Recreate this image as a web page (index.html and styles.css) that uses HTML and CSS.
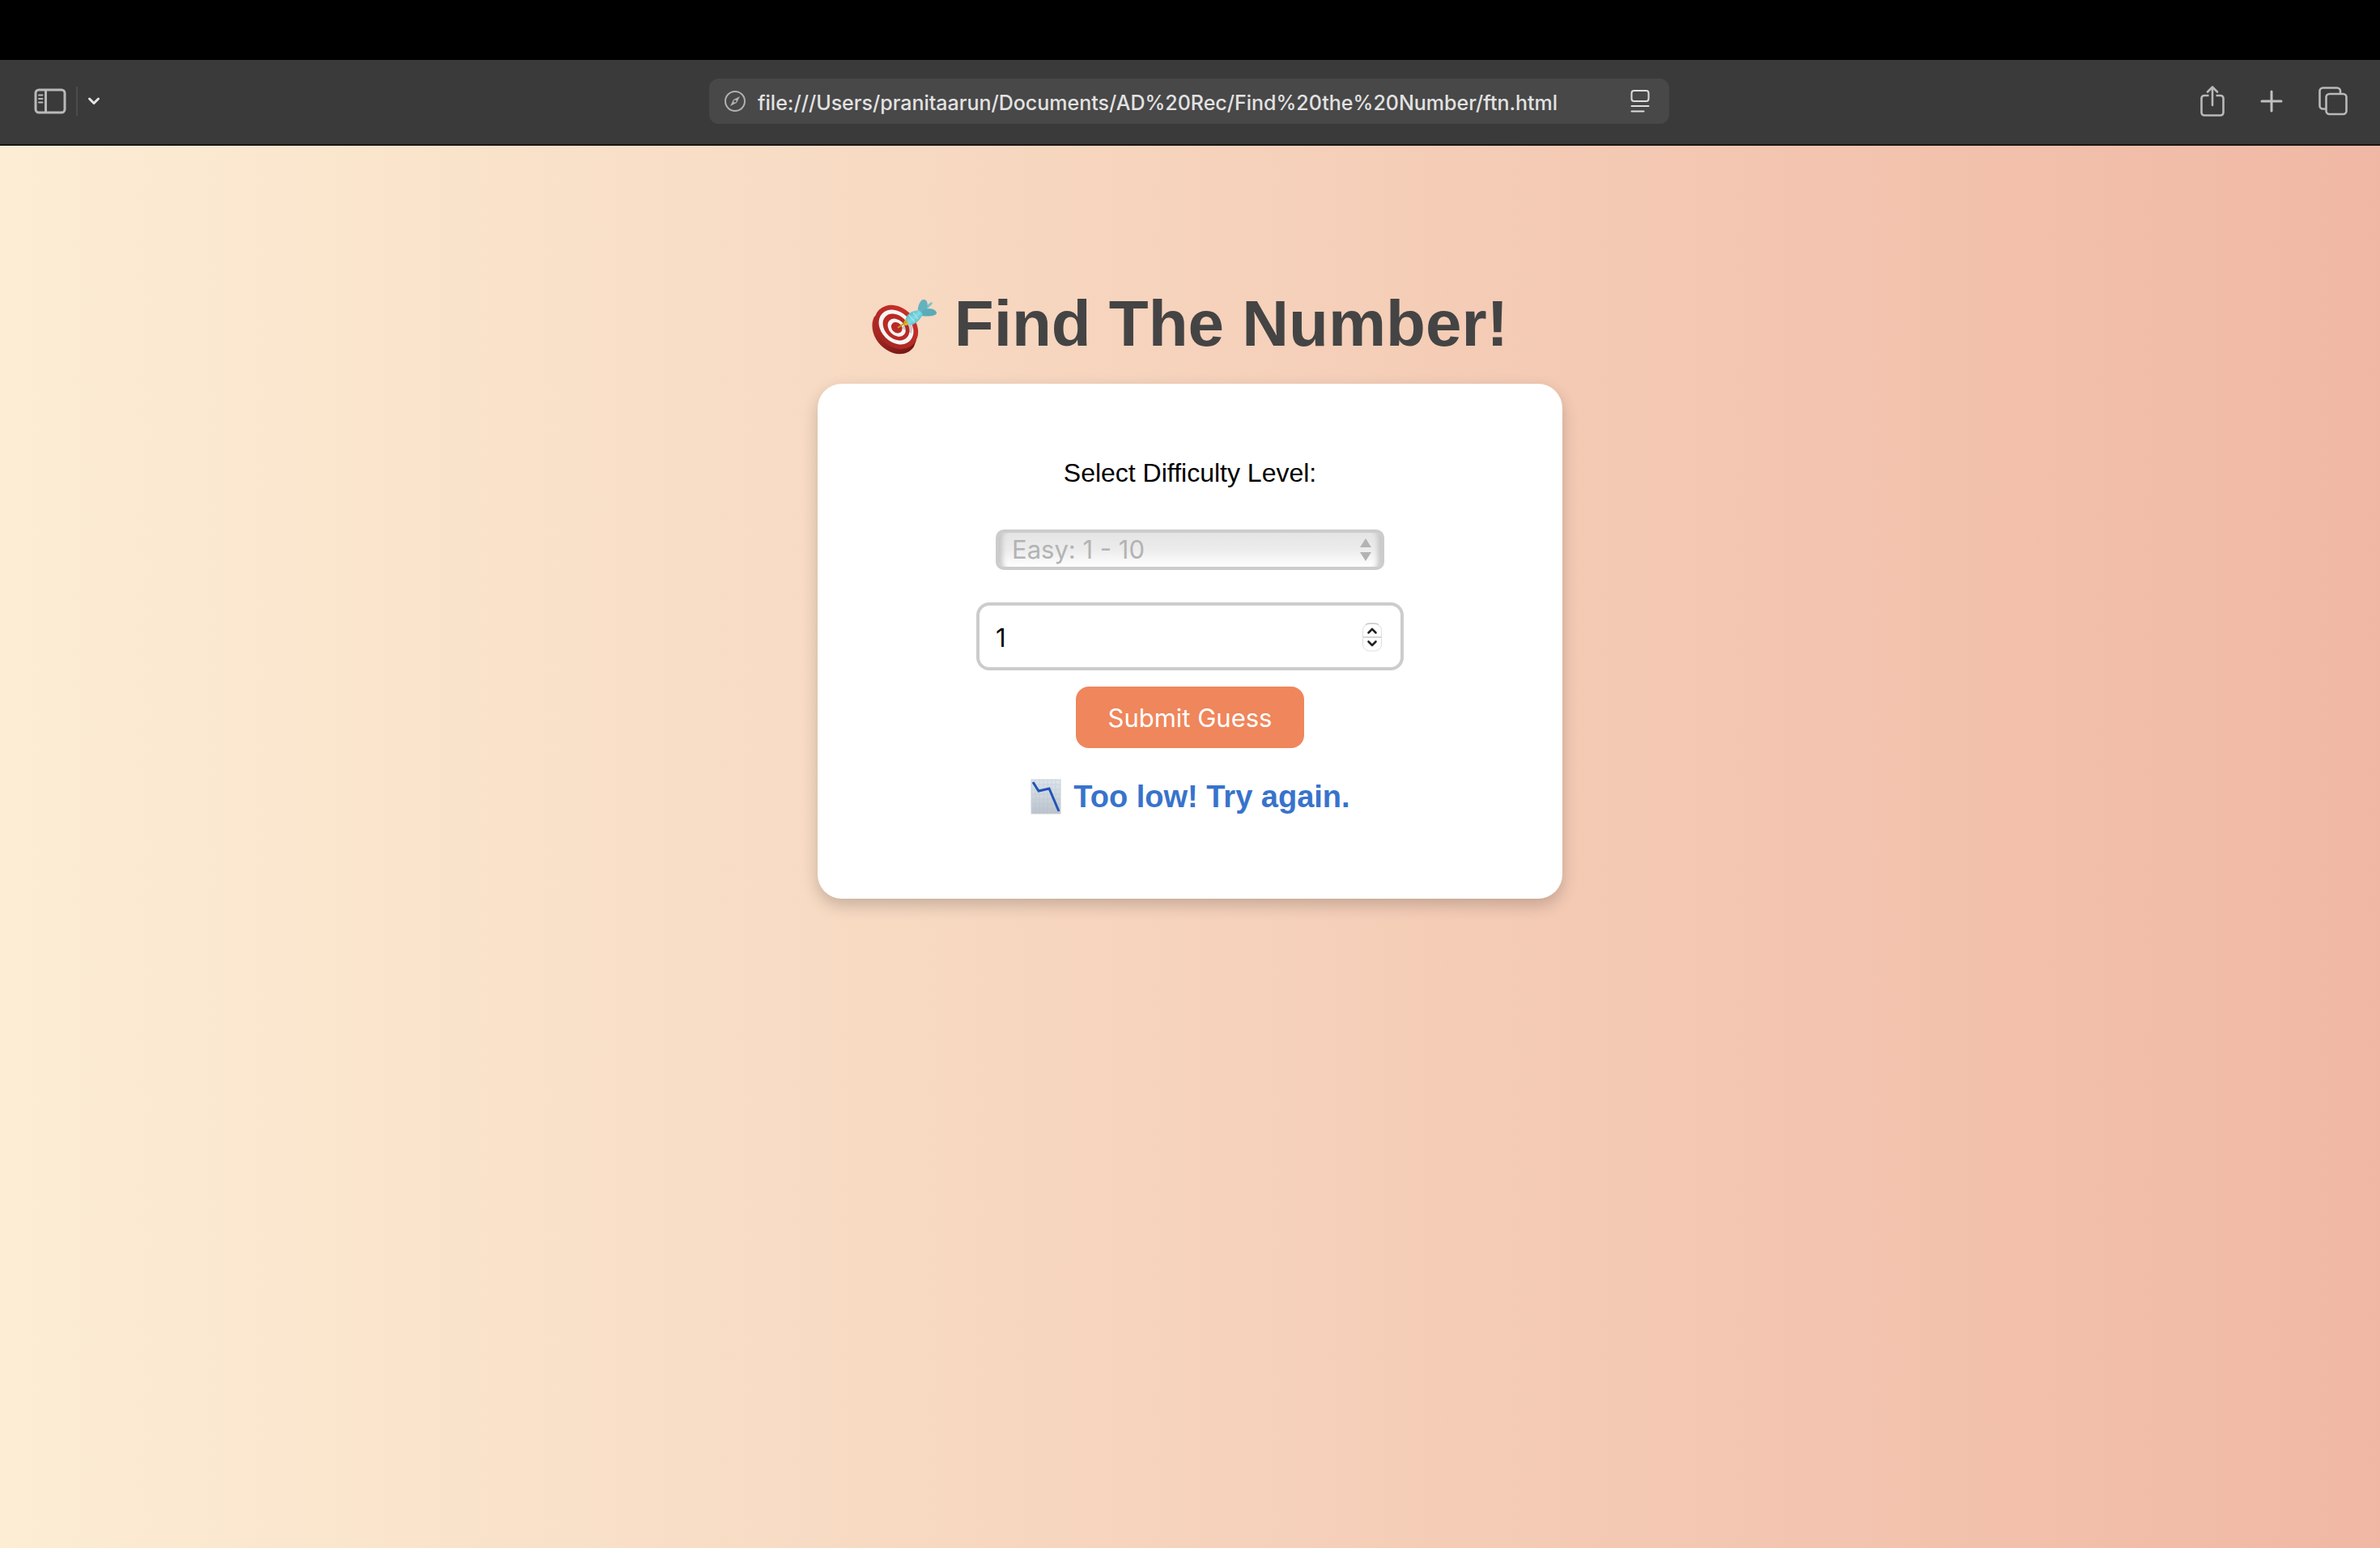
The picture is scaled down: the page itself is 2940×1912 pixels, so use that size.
FILE: index.html
```html
<!DOCTYPE html>
<html lang="en">
<head>
<meta charset="utf-8">
<title>Find The Number!</title>
<link rel="stylesheet" href="styles.css">
</head>
<body>
<div class="menu-strip"></div>
<header class="toolbar">
  <div class="tools tools-left">
    <button class="tool" type="button" aria-label="Show sidebar">
      <svg width="40" height="32" viewBox="0 0 40 32" fill="none" stroke="#b9b9b9" stroke-width="3">
        <rect x="2" y="2" width="36" height="28" rx="4"/>
        <path d="M14.500 2v28"/>
        <path d="M6 8.500h4.500M6 13h4.500M6 17.500h4.500" stroke-width="2" stroke-linecap="round"/>
      </svg>
    </button>
    <span class="divider"></span>
    <button class="tool" type="button" aria-label="Tab groups">
      <svg width="16" height="12" viewBox="0 0 16 12" fill="none" stroke="#e4e4e4" stroke-width="3" stroke-linecap="round" stroke-linejoin="round"><path d="M2.500 3L8 8.500 13.500 3"/></svg>
    </button>
  </div>
  <div class="address">
    <svg width="28" height="28" viewBox="0 0 28 28" fill="none" stroke="#b0b0b0" stroke-width="2">
      <circle cx="14" cy="14" r="12"/>
      <path d="M20 8l-4 8-8 4 4-8z" fill="#b0b0b0" stroke="none"/>
      <circle cx="14" cy="14" r="1.600" fill="#484848" stroke="none"/>
    </svg>
    <input class="url" type="text" aria-label="Address" value="file:///Users/pranitaarun/Documents/AD%20Rec/Find%20the%20Number/ftn.html">
    <button class="tool" type="button" aria-label="Reader">
      <svg width="24" height="30" viewBox="0 0 24 30" fill="none" stroke="#dedede" stroke-width="2" stroke-linecap="round">
        <rect x="1.500" y="2" width="21" height="13" rx="3"/>
        <path d="M1.500 21h21M1.500 27.500h15"/>
      </svg>
    </button>
  </div>
  <div class="tools tools-right">
    <button class="tool" type="button" aria-label="Share">
      <svg width="30" height="38" viewBox="0 0 30 38" fill="none" stroke="#b9b9b9" stroke-width="2.600" stroke-linejoin="round">
        <path d="M10.500 12H5a3.500 3.500 0 0 0-3.500 3.500V33A3.500 3.500 0 0 0 5 36.500h20a3.500 3.500 0 0 0 3.500-3.500V15.500A3.500 3.500 0 0 0 25 12h-5.500"/>
        <path d="M15 24V2M9 7.500L15 1.500l6 6" stroke-linecap="round"/>
      </svg>
    </button>
    <button class="tool" type="button" aria-label="New tab">
      <svg width="28" height="28" viewBox="0 0 28 28" stroke="#c0c0c0" stroke-width="3" stroke-linecap="round"><path d="M14 2v24M2 14h24"/></svg>
    </button>
    <button class="tool" type="button" aria-label="Tab overview">
      <svg width="36" height="36" viewBox="0 0 36 36" fill="none" stroke="#b9b9b9" stroke-width="2.600">
        <path d="M9 27.500H5.500a4 4 0 0 1-4-4V5.500a4 4 0 0 1 4-4h17.500a4 4 0 0 1 4 4V9"/>
        <rect x="9.500" y="9" width="25" height="25" rx="4"/>
      </svg>
    </button>
  </div>
</header>
<main class="page">
  <h1 class="title">
    <svg width="80" height="80" viewBox="0 -6 80 80" role="img" aria-label="Bullseye">
      <defs>
        <linearGradient id="rim" x1="0" y1="0" x2="1" y2="1"><stop offset="0" stop-color="#b8322b"/><stop offset="1" stop-color="#6d1411"/></linearGradient>
        <linearGradient id="face" x1="0" y1="0" x2="0" y2="1"><stop offset="0" stop-color="#c73029"/><stop offset="1" stop-color="#a82521"/></linearGradient>
        <linearGradient id="barrel" x1="0" y1="0" x2="1" y2="1"><stop offset="0" stop-color="#4fa3b0"/><stop offset=".5" stop-color="#7edce6"/><stop offset="1" stop-color="#3f98a6"/></linearGradient>
      </defs>
      <path d="M3 25C-4 39 4 57 18 66c12 8 27 7 34-4l3-8L12 20z" fill="url(#rim)"/>
      <g transform="rotate(45 30 38)">
        <ellipse cx="30" cy="38" rx="30" ry="24" fill="url(#face)"/>
        <ellipse cx="30" cy="38" rx="24" ry="18.500" fill="#f7f5f5"/>
        <ellipse cx="30" cy="38" rx="18.500" ry="14" fill="#b92a25"/>
        <ellipse cx="31" cy="38" rx="12.500" ry="9.500" fill="#f7f5f5"/>
        <ellipse cx="31" cy="38" rx="7.500" ry="6" fill="#b92a25"/>
      </g>
      <path d="M36 39l13 7 2-9-9-4z" fill="#7a3030" opacity=".25"/>
      <path d="M38 35l4-8 7 7-7 2z" fill="#e0b62e"/>
      <path d="M32 39l11-8" stroke="#c79a22" stroke-width="2"/>
      <path d="M59 18L72 8c2-2 4 0 2 2L63 21z" fill="#7cc3cc"/>
      <path d="M57 19c-1-7 3-15 7-15 5 0 6 7 3 13l-6 6z" fill="#62b3bd"/>
      <path d="M60 21c5-8 18-7 20-1 0 5-11 5-19 4z" fill="#59abb6"/>
      <path d="M42 27c2-6 8-9 16-10l5 5c-3 7-9 12-15 14-3-2-5-4-6-9z" fill="url(#barrel)"/>
      <path d="M46 23l7 9M51 20l6 8" stroke="#b2f0f5" stroke-width="1"/>
    </svg>
    <span>Find The Number!</span>
  </h1>
  <form class="card">
    <label class="label" for="level">Select Difficulty Level:</label>
    <div class="field level">
      <select class="level-select" id="level" disabled>
        <option>Easy: 1 - 10</option>
      </select>
      <svg class="mark" width="14" height="30" viewBox="0 0 14 30" fill="#b3b3b3"><path d="M7 1l7 11H0zM0 18h14L7 29z"/></svg>
    </div>
    <div class="field guess">
      <input class="guess-input" type="number" value="1" aria-label="Your guess">
      <svg class="mark" width="26" height="38" viewBox="0 -1 26 38" fill="none">
        <rect x="1.500" y="2.500" width="23" height="33.500" rx="8" fill="#fff" stroke="#dedede"/>
        <path d="M5 3.500Q7 2 10 2h6q3 0 5 1.500" stroke="#b5b5b5"/>
        <path d="M2 19h22" stroke="#d8d8d8" stroke-width="2"/>
        <path d="M8.500 13.500L13 9l4.500 4.500M8.500 24.500L13 29l4.500-4.500" stroke="#222" stroke-width="2.600" stroke-linecap="round" stroke-linejoin="round"/>
      </svg>
    </div>
    <button class="submit" type="button">Submit Guess</button>
    <p class="message">
      <svg width="40" height="44" viewBox="0 0 40 44" role="img" aria-label="Chart decreasing">
        <defs><linearGradient id="paper" x1="0" y1="0" x2="0" y2="1"><stop offset="0" stop-color="#dde5ec"/><stop offset="1" stop-color="#bcc3cc"/></linearGradient></defs>
        <rect x="2" y="1" width="36" height="42" fill="url(#paper)" stroke="#c8d0d6"/>
        <path d="M7 1v42M12 1v42M17 1v42M22 1v42M27 1v42M32 1v42M2 7h36M2 13h36M2 19h36M2 25h36M2 31h36M2 37h36" stroke="#aebccc" stroke-width="1" opacity=".3"/>
        <path d="M4 4l7 11 13-3 12 28" fill="none" stroke="#2253b8" stroke-width="3"/>
      </svg>
      <span>Too low! Try again.</span>
    </p>
  </form>
</main>
</body>
</html>
```
FILE: styles.css
```css
* {
  box-sizing: border-box;
}

body {
  margin: 0;
  min-height: 100vh;
  display: flex;
  flex-direction: column;
  font-family: "Liberation Sans", Helvetica, Arial, sans-serif;
}

svg {
  display: block;
  flex: none;
}

.menu-strip {
  height: 74px;
  background: #000;
}

.toolbar {
  display: grid;
  grid-template-columns: 1fr minmax(0, 1186px) 1fr;
  align-items: center;
  height: 106px;
  padding: 0 40px 2px 38px;
  background: #3a3a3a;
  border-bottom: 2px solid #1a1512;
}

.tools {
  display: flex;
  align-items: center;
}

.tools-left {
  gap: 12px;
  padding-left: 4px;
}

.tools-right {
  justify-content: flex-end;
  gap: 44px;
}

.tool {
  padding: 0;
  border: 0;
  background: none;
}

.divider {
  width: 2px;
  height: 36px;
  background: #4c4c4c;
}

.address {
  display: flex;
  align-items: center;
  gap: 14px;
  height: 56px;
  padding: 0 24px 0 18px;
  border-radius: 12px;
  background: #484848;
}

.url {
  flex: 1;
  min-width: 0;
  padding: 4px 0 0;
  border: 0;
  outline: 0;
  background: none;
  color: #e2e2e2;
  font: 500 25px/32px Inter, sans-serif;
}

.page {
  flex: 1;
  display: flex;
  flex-direction: column;
  align-items: center;
  gap: 28px;
  padding: 174px 40px 80px;
  background: linear-gradient(to right, #fcedd4, #f0b8a4);
}

.title {
  display: flex;
  align-items: center;
  gap: 22px;
  margin: 0;
  color: #444;
  font-size: 80px;
  line-height: 92px;
}

.card {
  display: flex;
  flex-direction: column;
  align-items: center;
  width: 100%;
  max-width: 920px;
  padding: 90px 60px 102px;
  border-radius: 30px;
  background: #fff;
  box-shadow: 0 8px 20px rgba(0, 0, 0, 0.2);
}

.label {
  margin-bottom: 50px;
  font-size: 32px;
  line-height: 40px;
}

.field {
  display: grid;
  align-items: center;
  max-width: 100%;
}

.field > * {
  grid-area: 1 / 1;
}

.mark {
  justify-self: end;
  pointer-events: none;
}

.level {
  width: 480px;
  margin-bottom: 40px;
}

.level .mark {
  margin-right: 16px;
}

.level-select {
  appearance: none;
  width: 100%;
  height: 50px;
  padding: 0 16px;
  border: 4px solid #ccc;
  border-radius: 10px;
  background: linear-gradient(#e5e5e5, #ececec 50%, #fff);
  box-shadow: inset 10px 0 6px -6px #c4c4c4, inset -10px 0 6px -6px #c4c4c4;
  color: #b3b3b3;
  font: 31px/40px Inter, sans-serif;
  opacity: 1;
}

.guess {
  width: 528px;
  margin-bottom: 20px;
}

.guess .mark {
  margin-right: 26px;
}

.guess-input {
  appearance: textfield;
  width: 100%;
  height: 84px;
  padding: 2px 20px 0;
  border: 4px solid #ccc;
  border-radius: 16px;
  background: #fff;
  color: #000;
  font: 31px/40px Inter, sans-serif;
}

.guess-input::-webkit-inner-spin-button {
  display: none;
}

.submit {
  height: 76px;
  margin-bottom: 36px;
  padding: 2px 40px 0;
  border: 0;
  border-radius: 16px;
  background: #ef865c;
  color: #fff;
  font: 31px/40px Inter, sans-serif;
}

.message {
  display: flex;
  align-items: center;
  gap: 14px;
  margin: 0;
  color: #3873cc;
  font-size: 38px;
  font-weight: bold;
  line-height: 48px;
}
```
